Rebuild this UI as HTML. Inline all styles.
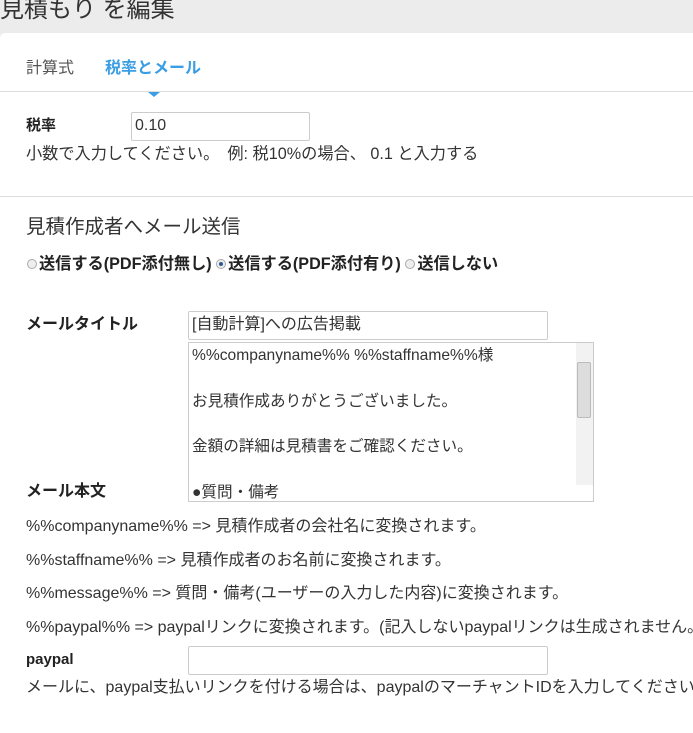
<!DOCTYPE html>
<html><head><meta charset="utf-8"><style>
body{margin:0;width:693px;height:712px;overflow:hidden;background:#ececec;font-family:"Liberation Sans","Noto Sans CJK JP",sans-serif;color:#333;position:relative}
.a{position:absolute;white-space:nowrap;line-height:1}
.card{position:absolute;left:0;top:33px;width:720px;height:700px;background:#fff;border-radius:5px 0 0 0}
.in{position:absolute;border:1px solid #ccc;background:#fff;box-sizing:border-box;border-radius:2px}
.b{font-weight:bold;color:#222}
.r{display:inline-block;width:10px;height:10px;border:1px solid #aaa;border-radius:50%;background:#eee;box-sizing:border-box;vertical-align:0;margin-right:2px;position:relative}
.r.on::after{content:"";position:absolute;left:2px;top:2px;width:4px;height:4px;border-radius:50%;background:#2a5a9a}
</style></head><body>
<div class="a" style="left:0;top:-2px;font-size:24px;color:#333">見積もり を編集</div>
<div class="card"></div>
<div class="a" style="left:26px;top:61px;font-size:16px;color:#555">計算式</div>
<div class="a" style="left:105px;top:61px;font-size:16px;color:#3a9ee4;font-weight:bold">税率とメール</div>
<div style="position:absolute;left:0;top:91px;width:693px;height:1px;background:#ddd"></div>
<div style="position:absolute;left:148px;top:92px;width:0;height:0;border-left:6px solid transparent;border-right:6px solid transparent;border-top:5px solid #3a9ee4"></div>
<div class="a b" style="left:26px;top:118px;font-size:15px">税率</div>
<div class="in" style="left:131px;top:112px;width:179px;height:29px"></div>
<div class="a" style="left:135px;top:118px;font-size:16px">0.10</div>
<div class="a" style="left:26px;top:146px;font-size:16.2px">小数で入力してください。　例: 税10%の場合、 0.1 と入力する</div>
<div style="position:absolute;left:0;top:196px;width:693px;height:1px;background:#ddd"></div>
<div class="a" style="left:26px;top:218px;font-size:19.5px">見積作成者へメール送信</div>
<div class="a b" style="left:27px;top:256px;font-size:16.2px"><span class="r"></span>送信する(PDF添付無し) <span class="r on"></span>送信する(PDF添付有り) <span class="r"></span>送信しない</div>
<div class="a b" style="left:26px;top:317px;font-size:16px">メールタイトル</div>
<div class="in" style="left:188px;top:311px;width:360px;height:29px"></div>
<div class="a" style="left:192px;top:317px;font-size:16px">[自動計算]への広告掲載</div>
<div class="in" style="left:188px;top:342px;width:406px;height:160px;border-radius:0"></div>
<div style="position:absolute;left:576px;top:343px;width:17px;height:142px;background:#f2f2f2"></div>
<div style="position:absolute;left:577px;top:362px;width:14px;height:56px;background:#ddd;border:1px solid #bbb;box-sizing:border-box;border-radius:2px"></div>
<div class="a" style="left:192px;top:333px;font-size:15.6px;line-height:45.5px">%%companyname%% %%staffname%%様<br>お見積作成ありがとうございました。<br>金額の詳細は見積書をご確認ください。<br>●質問・備考</div>
<div class="a b" style="left:26px;top:484px;font-size:16px">メール本文</div>
<div class="a" style="left:26px;top:510px;font-size:16px;line-height:33.5px">%%companyname%% =&gt; 見積作成者の会社名に変換されます。<br>%%staffname%% =&gt; 見積作成者のお名前に変換されます。<br>%%message%% =&gt; 質問・備考(ユーザーの入力した内容)に変換されます。<br>%%paypal%% =&gt; paypalリンクに変換されます。(記入しないpaypalリンクは生成されません。</div>
<div class="a b" style="left:26px;top:652px;font-size:15px">paypal</div>
<div class="in" style="left:188px;top:646px;width:360px;height:29px"></div>
<div class="a" style="left:26px;top:680px;font-size:16px">メールに、paypal支払いリンクを付ける場合は、paypalのマーチャントIDを入力してください</div>
</body></html>
